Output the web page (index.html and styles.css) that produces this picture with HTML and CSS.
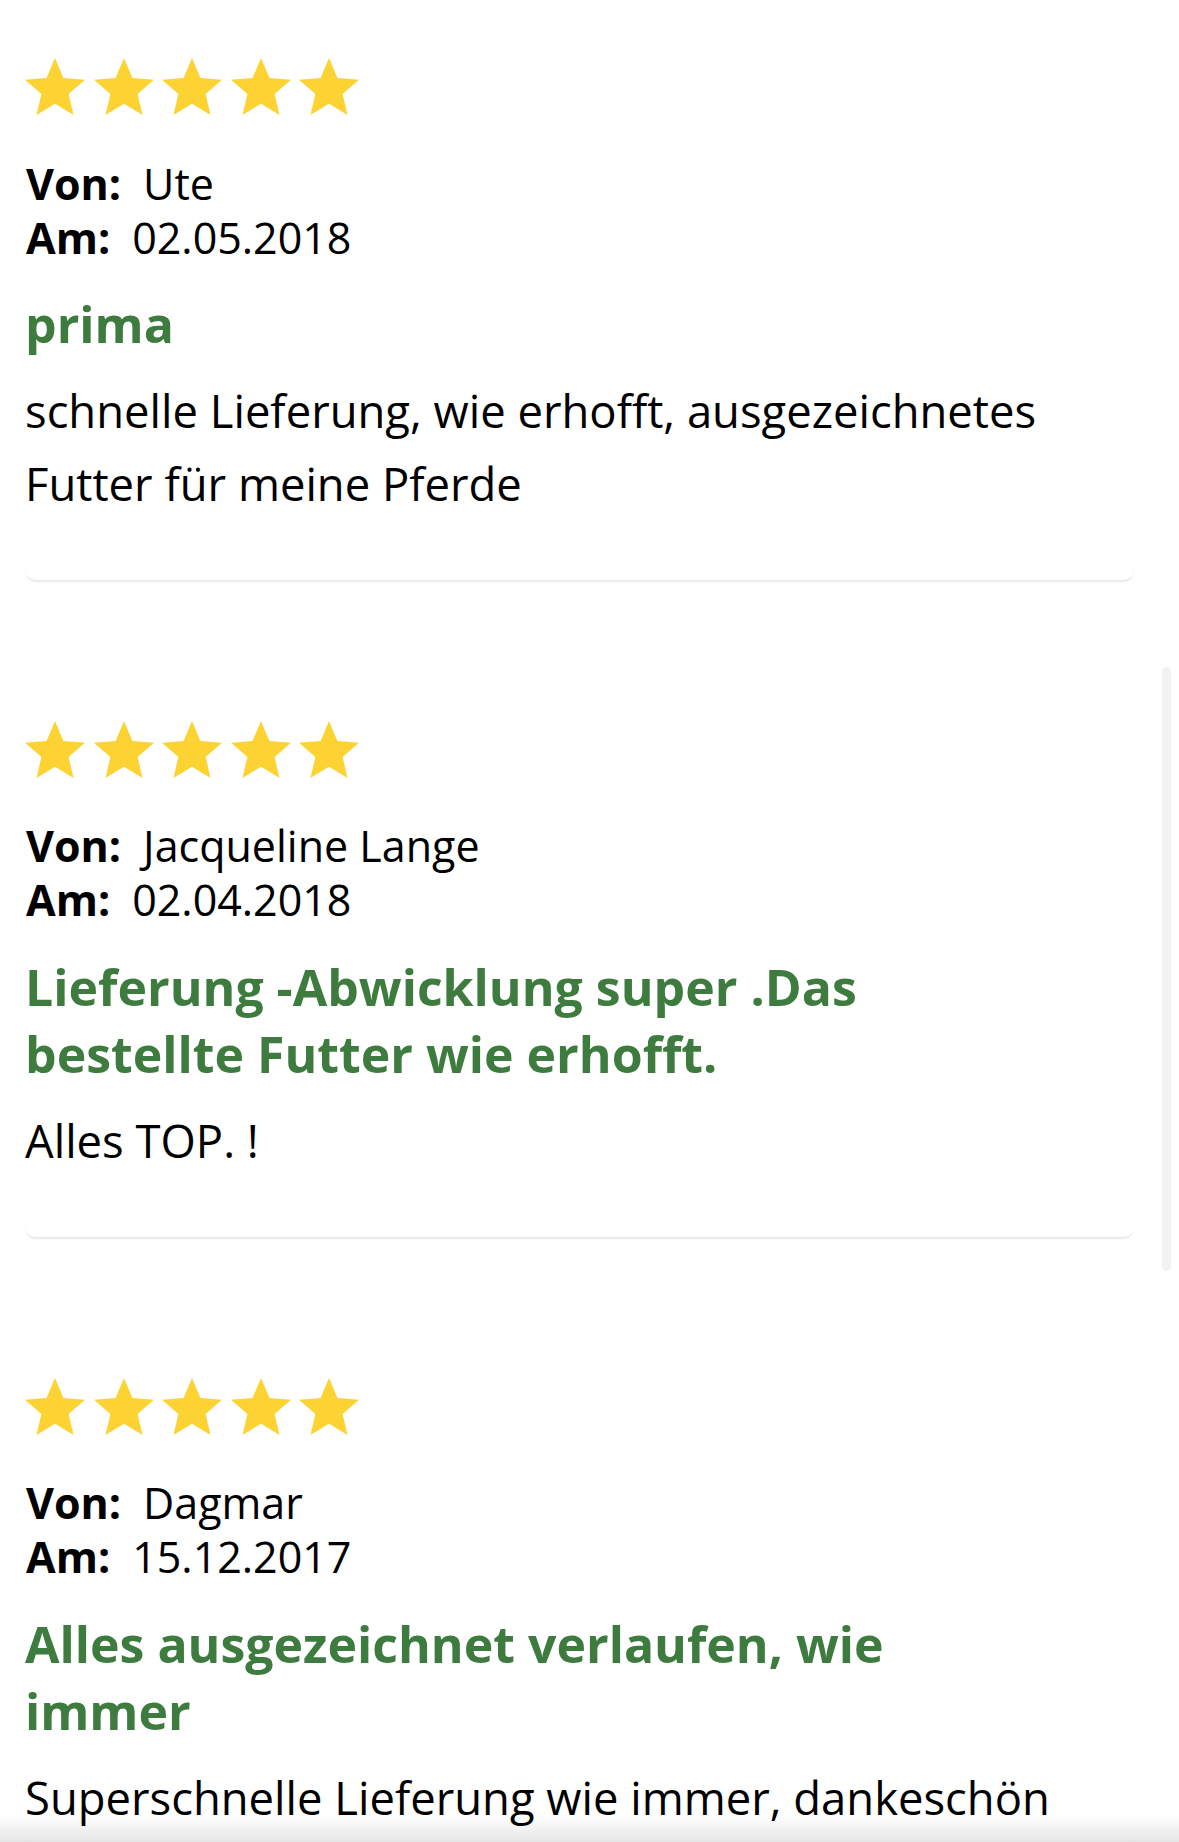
FILE: index.html
```html
<!DOCTYPE html>
<html lang="de">
<head>
<meta charset="utf-8">
<title>Bewertungen</title>
<link rel="stylesheet" href="styles.css">
</head>
<body>
<main class="reviews">
  <article class="review">
    <div class="stars" aria-label="5 von 5 Sternen">
      <svg class="star" viewBox="2 2 20 19"><path d="M12 17.27L18.18 21l-1.64-7.03L22 9.24l-7.19-.61L12 2 9.19 8.63 2 9.24l5.46 4.73L5.82 21z"/></svg>
      <svg class="star" viewBox="2 2 20 19"><path d="M12 17.27L18.18 21l-1.64-7.03L22 9.24l-7.19-.61L12 2 9.19 8.63 2 9.24l5.46 4.73L5.82 21z"/></svg>
      <svg class="star" viewBox="2 2 20 19"><path d="M12 17.27L18.18 21l-1.64-7.03L22 9.24l-7.19-.61L12 2 9.19 8.63 2 9.24l5.46 4.73L5.82 21z"/></svg>
      <svg class="star" viewBox="2 2 20 19"><path d="M12 17.27L18.18 21l-1.64-7.03L22 9.24l-7.19-.61L12 2 9.19 8.63 2 9.24l5.46 4.73L5.82 21z"/></svg>
      <svg class="star" viewBox="2 2 20 19"><path d="M12 17.27L18.18 21l-1.64-7.03L22 9.24l-7.19-.61L12 2 9.19 8.63 2 9.24l5.46 4.73L5.82 21z"/></svg>
    </div>
    <dl class="meta">
      <div class="meta-row"><dt>Von:</dt><dd>Ute</dd></div>
      <div class="meta-row"><dt>Am:</dt><dd>02.05.2018</dd></div>
    </dl>
    <h3 class="review-title">prima</h3>
    <p class="review-text">schnelle Lieferung, wie erhofft, ausgezeichnetes Futter für meine Pferde</p>
  </article>

  <article class="review">
    <div class="stars" aria-label="5 von 5 Sternen">
      <svg class="star" viewBox="2 2 20 19"><path d="M12 17.27L18.18 21l-1.64-7.03L22 9.24l-7.19-.61L12 2 9.19 8.63 2 9.24l5.46 4.73L5.82 21z"/></svg>
      <svg class="star" viewBox="2 2 20 19"><path d="M12 17.27L18.18 21l-1.64-7.03L22 9.24l-7.19-.61L12 2 9.19 8.63 2 9.24l5.46 4.73L5.82 21z"/></svg>
      <svg class="star" viewBox="2 2 20 19"><path d="M12 17.27L18.18 21l-1.64-7.03L22 9.24l-7.19-.61L12 2 9.19 8.63 2 9.24l5.46 4.73L5.82 21z"/></svg>
      <svg class="star" viewBox="2 2 20 19"><path d="M12 17.27L18.18 21l-1.64-7.03L22 9.24l-7.19-.61L12 2 9.19 8.63 2 9.24l5.46 4.73L5.82 21z"/></svg>
      <svg class="star" viewBox="2 2 20 19"><path d="M12 17.27L18.18 21l-1.64-7.03L22 9.24l-7.19-.61L12 2 9.19 8.63 2 9.24l5.46 4.73L5.82 21z"/></svg>
    </div>
    <dl class="meta">
      <div class="meta-row"><dt>Von:</dt><dd>Jacqueline Lange</dd></div>
      <div class="meta-row"><dt>Am:</dt><dd>02.04.2018</dd></div>
    </dl>
    <h3 class="review-title">Lieferung -Abwicklung super .Das bestellte Futter wie erhofft.</h3>
    <p class="review-text">Alles TOP. !</p>
  </article>

  <article class="review">
    <div class="stars" aria-label="5 von 5 Sternen">
      <svg class="star" viewBox="2 2 20 19"><path d="M12 17.27L18.18 21l-1.64-7.03L22 9.24l-7.19-.61L12 2 9.19 8.63 2 9.24l5.46 4.73L5.82 21z"/></svg>
      <svg class="star" viewBox="2 2 20 19"><path d="M12 17.27L18.18 21l-1.64-7.03L22 9.24l-7.19-.61L12 2 9.19 8.63 2 9.24l5.46 4.73L5.82 21z"/></svg>
      <svg class="star" viewBox="2 2 20 19"><path d="M12 17.27L18.18 21l-1.64-7.03L22 9.24l-7.19-.61L12 2 9.19 8.63 2 9.24l5.46 4.73L5.82 21z"/></svg>
      <svg class="star" viewBox="2 2 20 19"><path d="M12 17.27L18.18 21l-1.64-7.03L22 9.24l-7.19-.61L12 2 9.19 8.63 2 9.24l5.46 4.73L5.82 21z"/></svg>
      <svg class="star" viewBox="2 2 20 19"><path d="M12 17.27L18.18 21l-1.64-7.03L22 9.24l-7.19-.61L12 2 9.19 8.63 2 9.24l5.46 4.73L5.82 21z"/></svg>
    </div>
    <dl class="meta">
      <div class="meta-row"><dt>Von:</dt><dd>Dagmar</dd></div>
      <div class="meta-row"><dt>Am:</dt><dd>15.12.2017</dd></div>
    </dl>
    <h3 class="review-title">Alles ausgezeichnet verlaufen, wie immer</h3>
    <p class="review-text">Superschnelle Lieferung wie immer, dankeschön</p>
  </article>
</main>
<div class="scroll-indicator"></div>
<div class="bottom-fade"></div>
</body>
</html>
```

FILE: styles.css
```css
html, body {
  margin: 0;
  padding: 0;
  background: #ffffff;
}

body {
  font-family: "Open Sans", "Noto Sans", "DejaVu Sans", sans-serif;
  color: #000000;
  overflow: hidden;
  height: 1842px;
}

.reviews {
  display: flex;
  flex-direction: column;
  gap: 74px;
  margin-top: -9px;
  padding: 0 45px 0 25px;
}

.review {
  background: #ffffff;
  border-radius: 10px;
  padding: 67px 0 60.5px 0;
  box-shadow: 0 3px 2px -1px rgba(0, 0, 0, 0.09), 0 0 1px rgba(0, 0, 0, 0.05);
}

.stars {
  display: flex;
  gap: 8.5px;
  height: 57px;
}

.star {
  width: 60px;
  height: 57px;
  display: block;
  fill: #fdd333;
}

.meta {
  margin: 41.5px 0 0 0;
  font-size: 43px;
  line-height: 54px;
}

.meta-row {
  display: flex;
}

.meta dt {
  font-weight: 700;
  margin-right: 22px;
  padding-left: 1px;
}

.meta dd {
  margin: 0;
  font-weight: 400;
}

.review-title {
  margin: 26.5px 0 0 0;
  max-width: 950px;
  font-size: 50px;
  line-height: 67px;
  font-weight: 700;
  color: #3e7b3f;
}

.review-text {
  margin: 16px 0 0 0;
  font-size: 45.4px;
  line-height: 72.5px;
  font-weight: 400;
}

.scroll-indicator {
  position: fixed;
  left: 1162px;
  top: 667px;
  width: 9px;
  height: 604px;
  border-radius: 5px;
  background: #f2f2f2;
}

.bottom-fade {
  position: fixed;
  left: 0;
  right: 0;
  bottom: 0;
  height: 26px;
  background: linear-gradient(to bottom, rgba(0, 0, 0, 0), rgba(0, 0, 0, 0.1));
}
```
